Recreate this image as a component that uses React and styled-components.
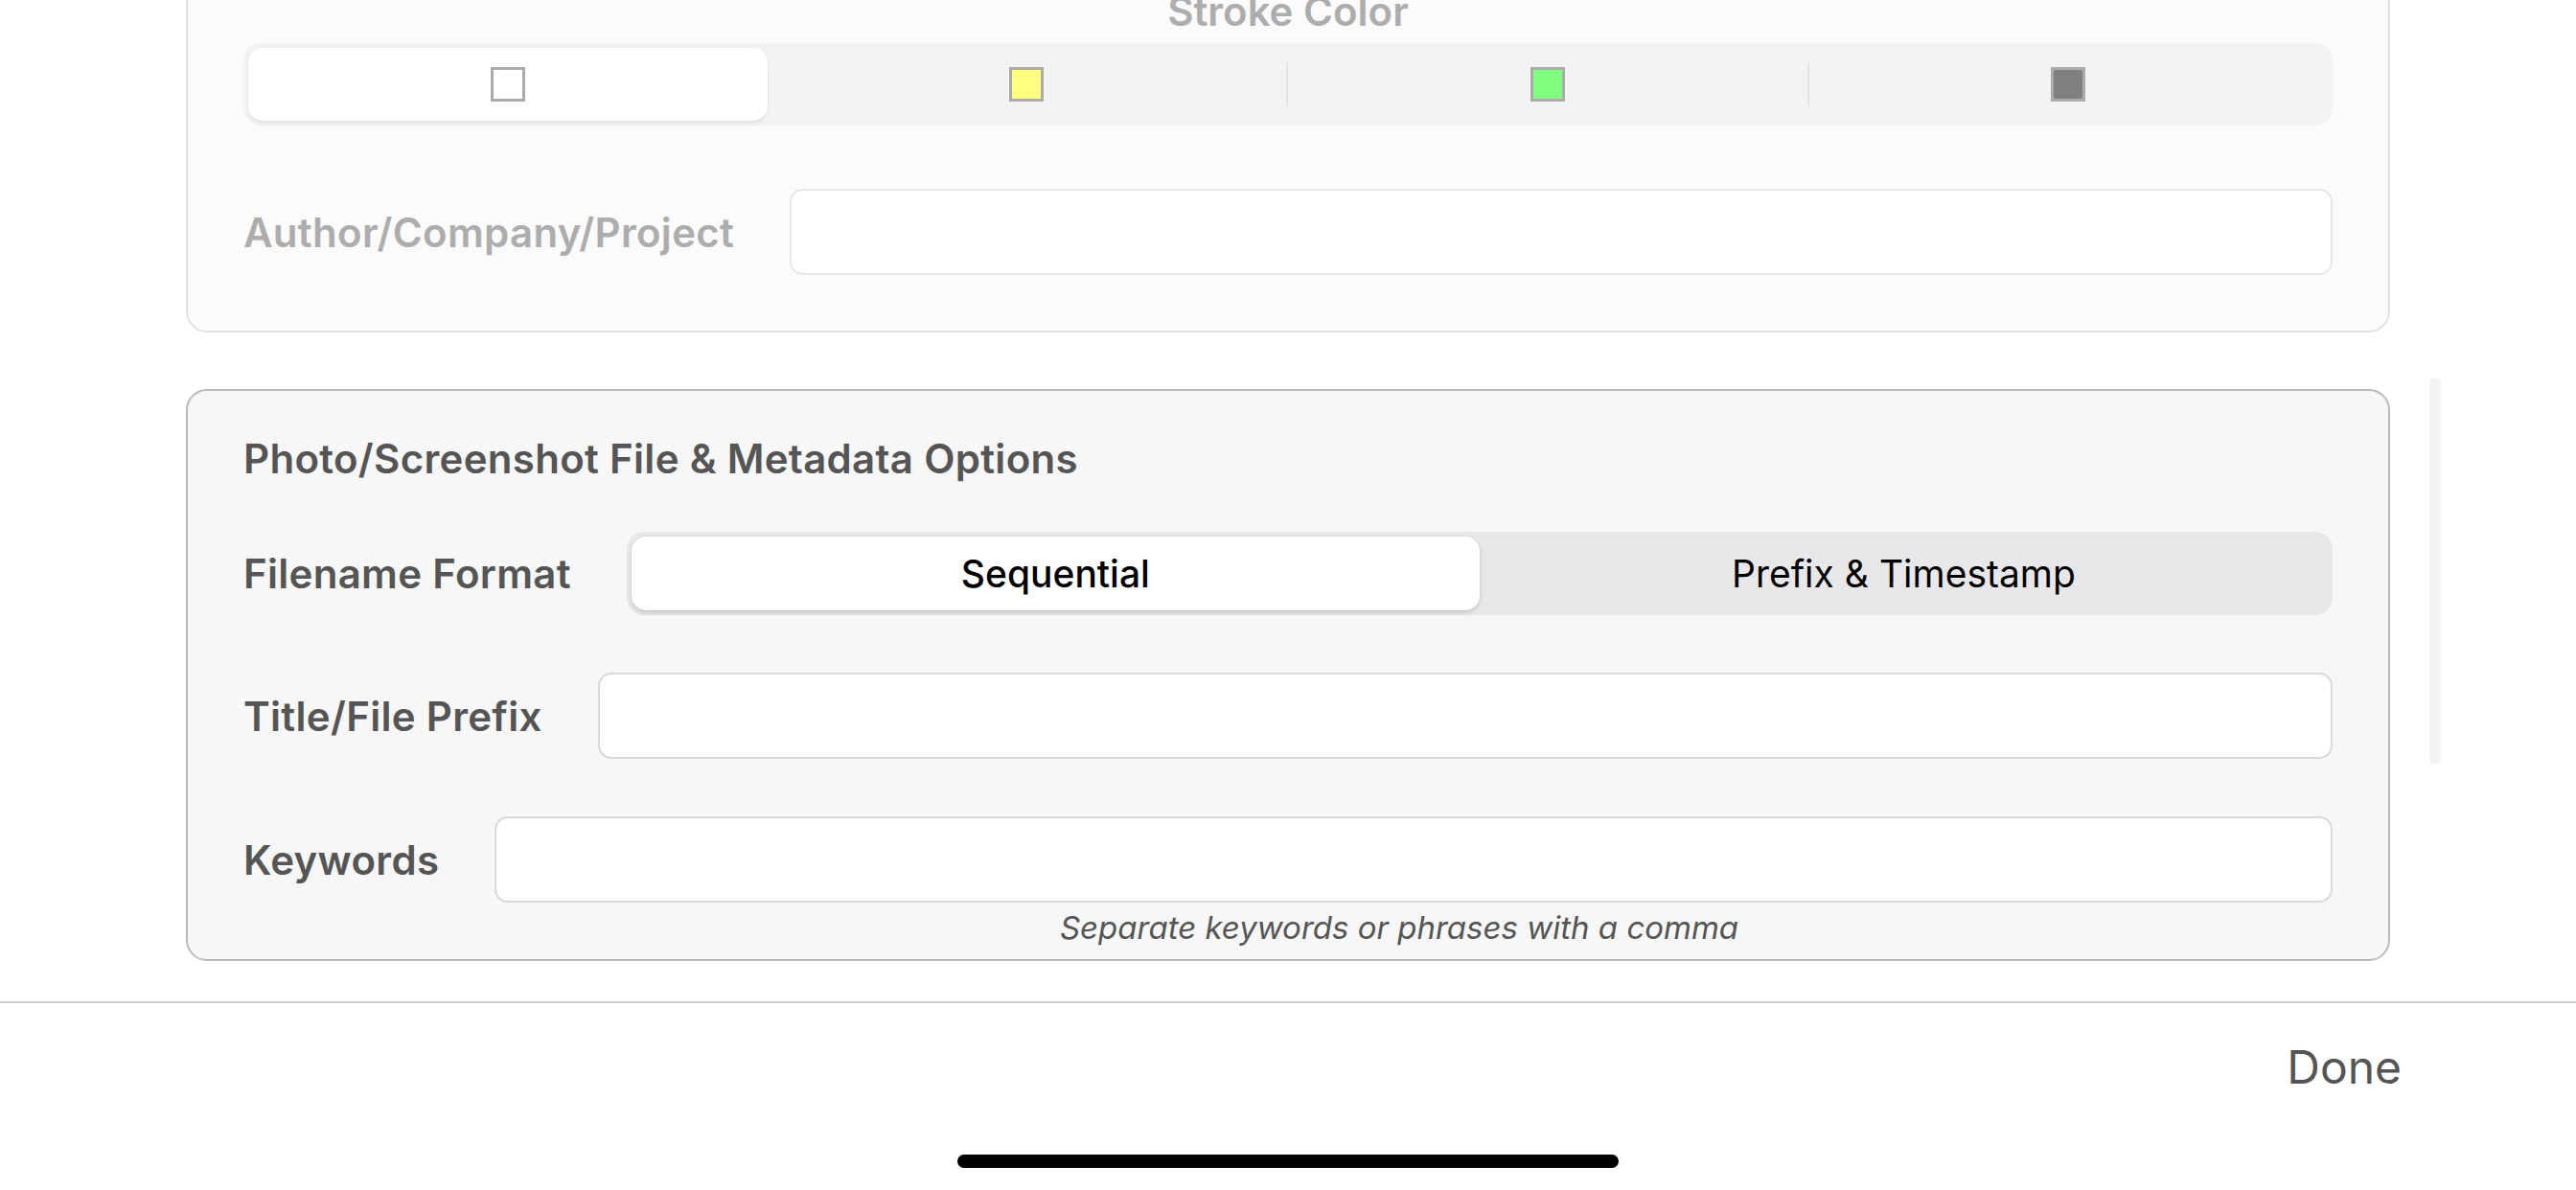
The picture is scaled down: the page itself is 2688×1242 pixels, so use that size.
import React from 'react';
import styled, { createGlobalStyle } from 'styled-components';

const GlobalStyle = createGlobalStyle`
  html, body {
    margin: 0;
    padding: 0;
    background: #ffffff;
  }
  body {
    font-family: Inter, "Noto Sans", "Liberation Sans", sans-serif;
    -webkit-font-smoothing: antialiased;
  }
  * { box-sizing: border-box; }
`;

const strokeColors = ['#ffffff', '#ffff80', '#80ff80', '#808080'];

const App = () => {
  return (
    <>
      <GlobalStyle />
      <Screen>
        <ScrollArea>
          <Content>
            <TopCard>
              <StrokeTitle>Stroke Color</StrokeTitle>
              <ColorControl>
                {strokeColors.map((c, i) => (
                  <React.Fragment key={c}>
                    {i > 1 && <Divider />}
                    <ColorSegment $active={i === 0}>
                      <Swatch $color={c} />
                    </ColorSegment>
                  </React.Fragment>
                ))}
              </ColorControl>
              <FieldRow>
                <Label $muted>Author/Company/Project</Label>
                <TextInput $muted />
              </FieldRow>
            </TopCard>

            <Card>
              <CardTitle>Photo/Screenshot File &amp; Metadata Options</CardTitle>
              <FieldRow>
                <Label>Filename Format</Label>
                <Segmented>
                  <Segment $active>Sequential</Segment>
                  <Segment>Prefix &amp; Timestamp</Segment>
                </Segmented>
              </FieldRow>
              <FieldRow>
                <Label>Title/File Prefix</Label>
                <TextInput />
              </FieldRow>
              <FieldRow>
                <Label>Keywords</Label>
                <TextInput />
              </FieldRow>
              <Hint>Separate keywords or phrases with a comma</Hint>
            </Card>
          </Content>
          <ScrollIndicator />
        </ScrollArea>

        <Footer>
          <DoneRow>
            <DoneButton>Done</DoneButton>
          </DoneRow>
          <HomeIndicator />
        </Footer>
      </Screen>
    </>
  );
};

const Screen = styled.div`
  width: 2688px;
  height: 1242px;
  display: flex;
  flex-direction: column;
  overflow: hidden;
`;

const ScrollArea = styled.div`
  position: relative;
  height: 1047px;
  flex-shrink: 0;
  overflow: hidden;
  border-bottom: 2px solid #cfcfcf;
`;

const Content = styled.div`
  display: flex;
  flex-direction: column;
  gap: 59px;
  padding: 0 194px;
  margin-top: -45px;
`;

const CardBase = styled.div`
  border-radius: 22px;
  padding: 0 58px;
`;

const TopCard = styled(CardBase)`
  background: #fbfbfb;
  border: 2px solid #e2e2e2;
  padding-top: 30px;
  padding-bottom: 58px;
  display: flex;
  flex-direction: column;
`;

const Card = styled(CardBase)`
  background: #f7f7f7;
  border: 2px solid #b9b9b9;
  padding-top: 46px;
  padding-bottom: 13px;
  display: flex;
  flex-direction: column;
`;

const StrokeTitle = styled.div`
  font-size: 42px;
  line-height: 50px;
  font-weight: 600;
  color: #adadad;
  text-align: center;
  margin-bottom: 8px;
`;

const ColorControl = styled.div`
  display: flex;
  align-items: center;
  height: 86px;
  padding: 5px;
  border-radius: 18px;
  background: #f3f3f5;
  margin-bottom: 66px;
`;

const ColorSegment = styled.div`
  flex: 1;
  height: 100%;
  display: flex;
  align-items: center;
  justify-content: center;
  border-radius: 15px;
  background: ${(p) => (p.$active ? '#ffffff' : 'transparent')};
  box-shadow: ${(p) => (p.$active ? '0 3px 4px rgba(0,0,0,0.06), 0 0 0 1px rgba(0,0,0,0.02)' : 'none')};
`;

const Divider = styled.div`
  width: 2px;
  height: 46px;
  background: #e3e3e5;
`;

const Swatch = styled.div`
  width: 36px;
  height: 36px;
  border: 3px solid #ababab;
  background: ${(p) => p.$color};
`;

const CardTitle = styled.div`
  font-size: 42px;
  line-height: 50px;
  font-weight: 600;
  letter-spacing: 0.3px;
  color: #555555;
  margin-bottom: 51px;
`;

const FieldRow = styled.div`
  display: flex;
  align-items: center;
  gap: 58px;
  & + & {
    margin-top: 60px;
  }
`;

const Label = styled.div`
  font-size: 42px;
  font-weight: 600;
  color: ${(p) => (p.$muted ? '#adadad' : '#555555')};
  white-space: nowrap;
  letter-spacing: 0.3px;
`;

const TextInput = styled.div`
  flex: 1;
  height: 90px;
  border-radius: 14px;
  background: #ffffff;
  border: 2px solid ${(p) => (p.$muted ? '#e6e6e6' : '#d9d9d9')};
`;

const Segmented = styled.div`
  flex: 1;
  display: flex;
  height: 87px;
  padding: 5px;
  border-radius: 18px;
  background: #e8e8ea;
`;

const Segment = styled.div`
  flex: 1;
  display: flex;
  align-items: center;
  justify-content: center;
  border-radius: 15px;
  font-size: 39px;
  font-weight: ${(p) => (p.$active ? 500 : 400)};
  color: #000000;
  background: ${(p) => (p.$active ? '#ffffff' : 'transparent')};
  box-shadow: ${(p) => (p.$active ? '0 3px 5px rgba(0,0,0,0.12), 0 0 0 1px rgba(0,0,0,0.03)' : 'none')};
`;

const Hint = styled.div`
  margin: 6px 0 0 258px;
  padding-right: 26px;
  text-align: center;
  font-size: 33px;
  line-height: 40px;
  font-style: italic;
  color: #555555;
`;

const ScrollIndicator = styled.div`
  position: absolute;
  left: 2535px;
  top: 394px;
  width: 12px;
  height: 404px;
  border-radius: 6px;
  background: #f3f3f3;
`;

const Footer = styled.div`
  flex: 1;
  display: flex;
  flex-direction: column;
  align-items: center;
`;

const DoneRow = styled.div`
  align-self: stretch;
  display: flex;
  justify-content: flex-end;
  padding: 37px 182px 0 0;
`;

const DoneButton = styled.div`
  font-size: 48px;
  line-height: 60px;
  color: #555555;
`;

const HomeIndicator = styled.div`
  width: 690px;
  height: 14px;
  border-radius: 7px;
  background: #000000;
  margin-top: 61px;
`;

export default App;
